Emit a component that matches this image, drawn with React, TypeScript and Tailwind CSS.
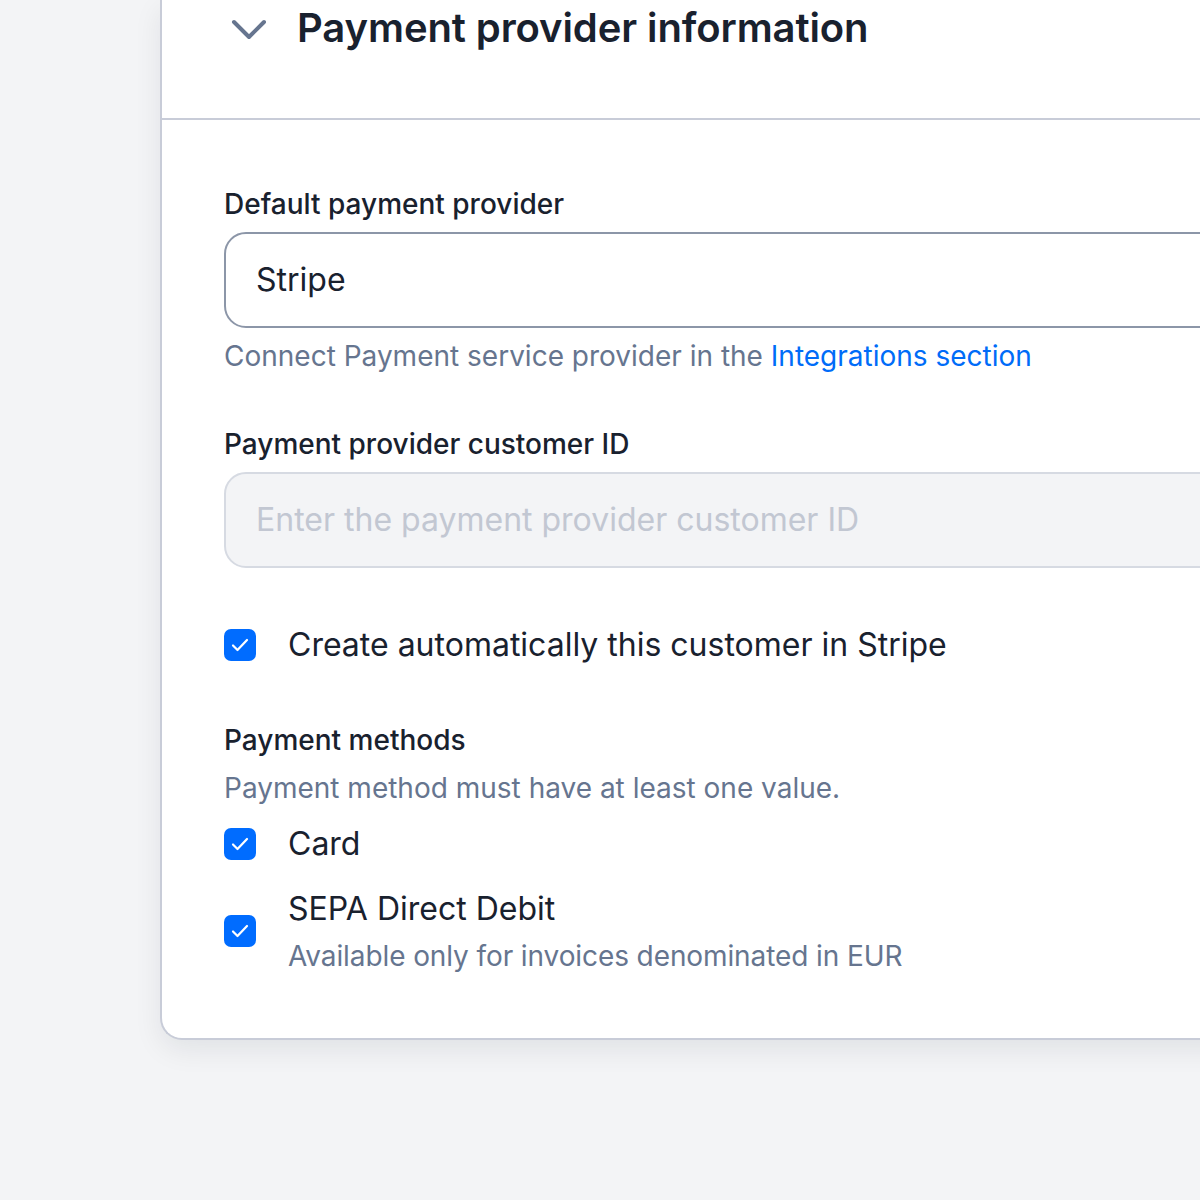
import React from "react";

// Checkbox glyph drawn as a filled rounded square with a tick
function Check() {
  return (
    <span className="flex h-[32px] w-[32px] shrink-0 items-center justify-center rounded-[7px] bg-[#006cff]">
      <svg width="18" height="14" viewBox="0 0 18 14" fill="none">
        <path d="M2 7.5 6.5 12 16 2" stroke="white" strokeWidth="2.2" strokeLinecap="round" strokeLinejoin="round" />
      </svg>
    </span>
  );
}

export default function App() {
  return (
    <div
      className="h-[1200px] w-[1200px] overflow-hidden bg-[#f3f4f6] pl-[160px]"
      style={{ fontFamily: "Inter, 'Noto Sans', sans-serif" }}
    >
      <div className="w-[1100px] rounded-bl-[22px] border-2 border-t-0 border-r-0 border-[#c8ccd8] bg-white shadow-[0_10px_28px_rgba(15,23,42,0.08)]">
        {/* Header */}
        <div className="flex h-[118px] items-start gap-[30px] pl-[69px] pt-[4px]">
          <svg width="36" height="22" viewBox="0 0 36 22" fill="none" className="mt-[15px]">
            <path d="M3 3 18 18 33 3" stroke="#66758f" strokeWidth="4" strokeLinecap="round" strokeLinejoin="round" />
          </svg>
          <h1 className="text-[40px] font-semibold leading-[48px] tracking-[-0.1px] text-[#19212e]">
            Payment provider information
          </h1>
        </div>
        <div className="h-[2px] bg-[#c8ccd8]" />

        {/* Body */}
        <div className="pl-[62px] pt-[64px] pb-[62px]">
          <label className="block text-[28px] font-medium leading-[40px] text-[#19212e]">Default payment provider</label>
          <div className="mt-[8px] flex h-[96px] items-center rounded-[22px] border-2 border-[#8c96a8] pl-[30px] text-[32px] text-[#19212e]">
            Stripe
          </div>
          <p className="mt-[8px] text-[28px] leading-[40px] text-[#66758f]">
            Connect Payment service provider in the <span className="text-[#006cf8]">Integrations section</span>
          </p>

          <label className="mt-[48px] block text-[28px] font-medium leading-[40px] text-[#19212e]">
            Payment provider customer ID
          </label>
          <div className="mt-[8px] flex h-[96px] items-center rounded-[22px] border-2 border-[#d6dae2] bg-[#f3f4f6] pl-[30px] text-[32px] text-[#c2c7d2]">
            Enter the payment provider customer ID
          </div>

          <div className="mt-[53px] flex items-center gap-[32px]">
            <Check />
            <span className="text-[32px] leading-[48px] text-[#19212e]">Create automatically this customer in Stripe</span>
          </div>

          <label className="mt-[51px] block text-[28px] font-medium leading-[40px] text-[#19212e]">Payment methods</label>
          <p className="mt-[8px] text-[28px] leading-[40px] text-[#66758f]">Payment method must have at least one value.</p>

          <div className="mt-[12px] flex items-center gap-[32px]">
            <Check />
            <span className="text-[32px] leading-[48px] text-[#19212e]">Card</span>
          </div>
          <div className="mt-[17px] flex items-center gap-[32px]">
            <Check />
            <div>
              <div className="text-[32px] leading-[48px] text-[#19212e]">SEPA Direct Debit</div>
              <div className="mt-[3px] text-[28px] leading-[40px] tracking-[-0.1px] text-[#66758f]">
                Available only for invoices denominated in EUR
              </div>
            </div>
          </div>
        </div>
      </div>
    </div>
  );
}
